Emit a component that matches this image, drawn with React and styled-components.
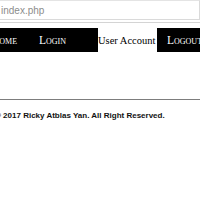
import React from "react";
import styled, { createGlobalStyle } from "styled-components";

const Global = createGlobalStyle`
  html, body {
    margin: 0;
    padding: 0;
    background: #fff;
    overflow: hidden;
  }
`;

const Chrome = styled.div`
  height: 22px;
  border-bottom: 1px solid #d4d4d4;
  box-sizing: content-box;
`;

const Address = styled.div`
  height: 18px;
  margin-left: -10px;
  border: 1px solid #dadada;
  border-top-color: #e4e4e4;
  padding-left: 10px;
  display: flex;
  align-items: center;
  font-family: "Liberation Sans", Arial, sans-serif;
  font-size: 10px;
  color: #8c8c8c;
`;

const Page = styled.div`
  margin-left: -30px;
  padding-top: 5px;
`;

const Nav = styled.ul`
  list-style: none;
  margin: 0;
  padding: 0;
  display: flex;
  height: 24px;
  white-space: nowrap;
`;

const NavItem = styled.li`
  display: flex;
  align-items: center;
  width: ${(p) => p.$w}px;
  padding-left: ${(p) => p.$pad}px;
  box-sizing: border-box;
  flex: none;
  overflow: hidden;
  background: ${(p) => (p.$active ? "#fff" : "#000")};
  color: ${(p) => (p.$active ? "#000" : "#fff")};
  font-family: "Liberation Serif", "Times New Roman", serif;
  font-size: ${(p) => (p.$active ? 10.5 : 11.5)}px;
  font-variant: ${(p) => (p.$active ? "normal" : "small-caps")};
`;

const Rule = styled.hr`
  margin: 47px 0 0;
  border: 0;
  border-top: 1px solid #7d7d7d;
  height: 0;
`;

const Footer = styled.p`
  margin: 11px 0 0 25px;
  font-family: "Liberation Sans", Arial, sans-serif;
  font-weight: bold;
  font-size: 8px;
  color: #111;
  white-space: nowrap;
`;

export default function App() {
  return (
    <>
      <Global />
      <Chrome>
        <Address>index.php</Address>
      </Chrome>
      <Page>
        <Nav>
          <NavItem $w={62} $pad={21}>Home</NavItem>
          <NavItem $w={66} $pad={7}>Login</NavItem>
          <NavItem $w={59} $pad={0} $active>User Account</NavItem>
          <NavItem $w={80} $pad={10}>Logout</NavItem>
        </Nav>
        <Rule />
        <Footer>© 2017 Ricky Atblas Yan. All Right Reserved.</Footer>
      </Page>
    </>
  );
}
